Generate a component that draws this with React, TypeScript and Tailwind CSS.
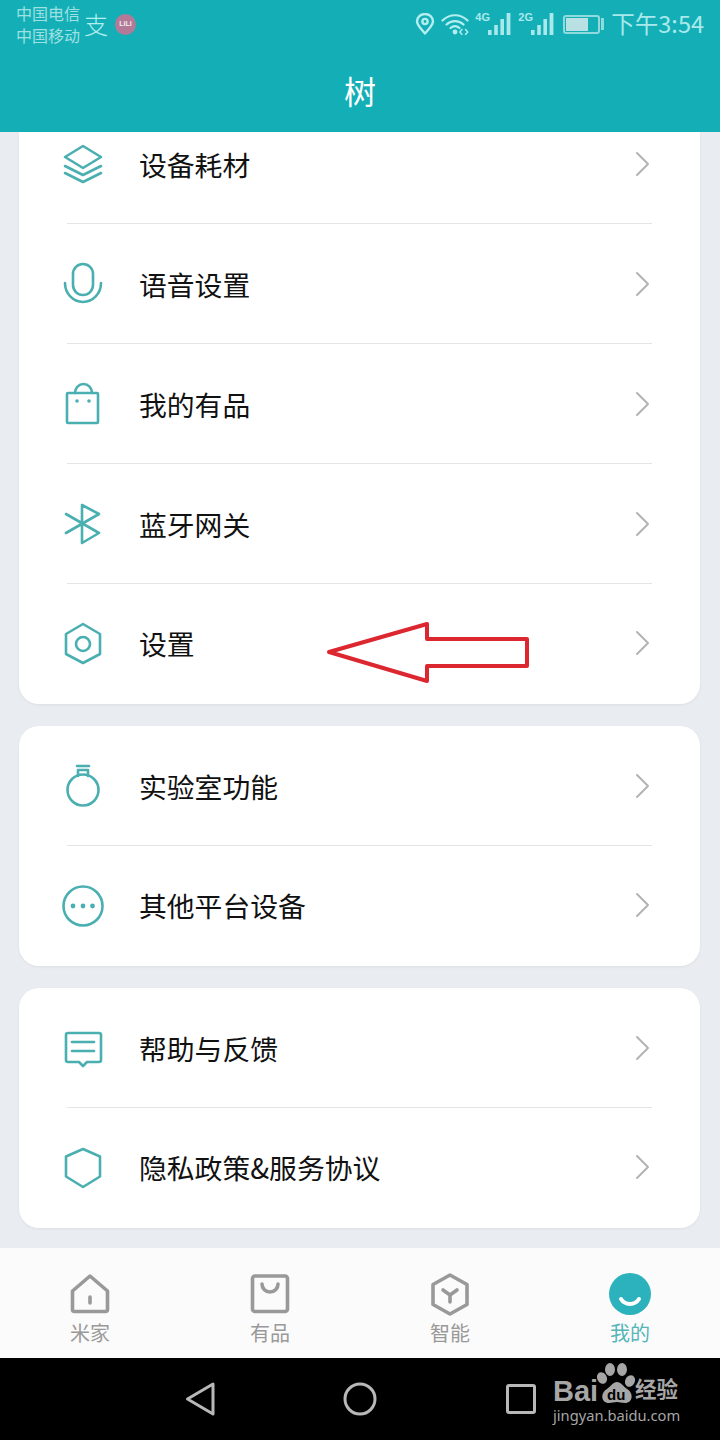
import React from "react";

const CJK = "font-['Noto_Sans_CJK_SC','Noto_Sans',sans-serif]";

function Ico({ children }: { children: React.ReactNode }) {
  return (
    <svg width="48" height="48" viewBox="0 0 48 48" fill="none" stroke="#4aafb1" strokeWidth="2.6" strokeLinejoin="round" strokeLinecap="round" className="shrink-0">
      {children}
    </svg>
  );
}

const Layers = () => (
  <Ico>
    <path d="M24 5L42 16L24 27L6 16Z" />
    <path d="M6 25L24 34L42 25" />
    <path d="M6 32L24 41L42 32" />
  </Ico>
);
const Mic = () => (
  <Ico>
    <rect x="14" y="3" width="20" height="31" rx="10" />
    <path d="M6 22A18 19 0 0 0 42 22" />
  </Ico>
);
const Bag = () => (
  <Ico>
    <rect x="8" y="12" width="31" height="30" rx="1" />
    <path d="M16 12A8.5 9 0 0 1 33 12" />
    <circle cx="18" cy="20" r="1.8" fill="#4aafb1" stroke="none" />
    <circle cx="30" cy="20" r="1.8" fill="#4aafb1" stroke="none" />
  </Ico>
);
const Bt = () => (
  <Ico>
    <path d="M7 13L40 32L23 42V4L40 13L7 32" />
  </Ico>
);
const Hex = () => (
  <Ico>
    <path d="M24 4L41 14V34L24 43L7 34V14Z" />
    <circle cx="24" cy="24" r="7" />
  </Ico>
);
const Flask = () => (
  <Ico>
    <circle cx="24" cy="27" r="15.5" />
    <path d="M18 3H30" />
    <path d="M19 13V7H29V13" />
  </Ico>
);
const Dots = () => (
  <Ico>
    <circle cx="24" cy="24" r="19.5" />
    <circle cx="14" cy="24" r="2.4" fill="#4aafb1" stroke="none" />
    <circle cx="24" cy="24" r="2.4" fill="#4aafb1" stroke="none" />
    <circle cx="33.5" cy="24" r="2.4" fill="#4aafb1" stroke="none" />
  </Ico>
);
const Msg = () => (
  <Ico>
    <path d="M9 8H40Q42 8 42 10V35Q42 37 40 37H28L24 41L20 37H9Q7 37 7 35V10Q7 8 9 8Z" />
    <path d="M13 17H35" />
    <path d="M13 26H35" />
  </Ico>
);
const Shield = () => (
  <Ico>
    <path d="M24 5L41 12.5V32.5L24 43L7 32.5V12.5Z" />
  </Ico>
);

const Chevron = () => (
  <svg width="16" height="26" viewBox="0 0 16 26" fill="none" stroke="#b3b3b3" strokeWidth="2" strokeLinecap="round" strokeLinejoin="round" className="mb-[2px] shrink-0">
    <path d="M3 2L14 13L3 24" />
  </svg>
);

function Row({ icon, label, cls }: { icon: React.ReactNode; label: string; cls: string }) {
  return (
    <div className={`flex items-center pl-[40px] pr-[50px] ${cls}`}>
      {icon}
      <span className={`ml-[32px] flex-1 pb-[3px] text-[27.8px] leading-[36px] text-[#111] ${CJK}`}>{label}</span>
      <Chevron />
    </div>
  );
}

const Divider = () => <div className="mx-[48px] h-px bg-[#e4e4e4]" />;

function Tab({ icon, label, active }: { icon: React.ReactNode; label: string; active?: boolean }) {
  return (
    <div className="flex flex-1 flex-col items-center pt-[24px]">
      <div className="h-[46px] w-[48px]">{icon}</div>
      <span className={`mt-[2px] text-[20px] leading-[26px] ${active ? "text-[#55b5b8]" : "text-[#999]"} ${CJK}`}>{label}</span>
    </div>
  );
}

const tabStroke = { fill: "none", stroke: "#999", strokeWidth: 3.6, strokeLinejoin: "round", strokeLinecap: "round" } as const;

function StatusBars() {
  return (
    <svg width="24" height="22" viewBox="0 0 24 22" fill="#a9e9ec">
      <rect x="0" y="17" width="3.6" height="5" />
      <rect x="6.2" y="12" width="3.6" height="10" />
      <rect x="12.4" y="6" width="3.6" height="16" />
      <rect x="18.6" y="0" width="3.8" height="22" />
    </svg>
  );
}

export default function App() {
  return (
    <div className={`relative flex h-[1440px] w-[720px] flex-col overflow-hidden bg-[#e9edf1] ${CJK}`}>
      <header className="flex h-[132px] shrink-0 flex-col bg-[#14afb6]">
        <div className="flex h-[48px] items-center pl-[16px] pr-[16px]">
          <div className="flex flex-col text-[16px] leading-[22px] text-[#9fe0e2]">
            <span>中国电信</span>
            <span>中国移动</span>
          </div>
          <span className="ml-[4px] text-[24px] font-light leading-[28px] text-[#b5eef0]">支</span>
          <div className="ml-[7px] flex h-[21px] w-[21px] items-center justify-center rounded-full bg-[#b37a98] font-['Liberation_Sans',sans-serif] text-[7px] font-bold text-[#eee]">
            LiLi
          </div>
          <div className="flex-1" />
          <svg width="20" height="22" viewBox="0 0 20 22" fill="none" stroke="#b5eef0" strokeWidth="2.4" className="mr-[6px]">
            <path d="M10 20.5C5 15 2 11.5 2 8.5A8 7.5 0 0 1 18 8.5C18 11.5 15 15 10 20.5Z" strokeLinejoin="round" />
            <circle cx="10" cy="8.5" r="2.6" />
          </svg>
          <svg width="28" height="22" viewBox="0 0 28 22" fill="none" stroke="#b5eef0" strokeWidth="2.2" strokeLinecap="round" className="mr-[6px]">
            <path d="M1.5 7.5C8.5 0.5 19.5 0.5 26.5 7.5" />
            <path d="M5.5 11.5C10.5 7 17.5 7 22.5 11.5" />
            <path d="M9.5 15C12.5 12.5 15.5 12.5 18.5 15" />
            <circle cx="14" cy="19" r="2.4" fill="#b5eef0" stroke="none" />
            <path d="M21 16.5L18.8 19L21 21.5M24.5 16.5L26.7 19L24.5 21.5" strokeWidth="1.4" />
          </svg>
          <div className="relative h-[22px] w-[36px]">
            <span className="absolute left-0 top-[-2px] font-['Liberation_Sans',sans-serif] text-[11px] font-bold leading-[12px] text-[#a9e9ec]">4G</span>
            <div className="absolute right-[-1px] top-0">
              <StatusBars />
            </div>
          </div>
          <div className="relative ml-[7px] h-[22px] w-[36px]">
            <span className="absolute left-0 top-[-2px] font-['Liberation_Sans',sans-serif] text-[11px] font-bold leading-[12px] text-[#a9e9ec]">2G</span>
            <div className="absolute right-[-1px] top-0">
              <StatusBars />
            </div>
          </div>
          <div className="ml-[9px] flex h-[19px] w-[37px] items-center rounded-[3px] border-2 border-[#8fdadd] px-[1px]">
            <div className="h-[13px] w-[22px] bg-[#b9e0e2]" />
          </div>
          <div className="ml-[1px] h-[12px] w-[3px] bg-[#8fdadd]" />
          <span className="ml-[7px] pb-[2px] text-[23.5px] leading-[28px] text-[#a9e9ec]">下午3:54</span>
        </div>
        <div className="flex flex-1 items-center justify-center pb-[1px] text-[32px] leading-[40px] text-white">树</div>
      </header>

      <main className="flex flex-1 flex-col gap-[22px] pl-[19px] pr-[20px]">
        <section className="rounded-b-[20px] bg-white shadow-[0_1px_3px_rgba(0,0,0,0.06)]">
          <Row icon={<Layers />} label="设备耗材" cls="h-[91px] pb-[25px]" />
          <Divider />
          <Row icon={<Mic />} label="语音设置" cls="h-[119px] pt-[3px]" />
          <Divider />
          <Row icon={<Bag />} label="我的有品" cls="h-[119px] pt-[3px]" />
          <Divider />
          <Row icon={<Bt />} label="蓝牙网关" cls="h-[119px] pt-[3px]" />
          <Divider />
          <Row icon={<Hex />} label="设置" cls="h-[120px]" />
        </section>
        <section className="rounded-[20px] bg-white shadow-[0_1px_3px_rgba(0,0,0,0.06)]">
          <Row icon={<Flask />} label="实验室功能" cls="h-[119px] pt-[3px]" />
          <Divider />
          <Row icon={<Dots />} label="其他平台设备" cls="h-[120px]" />
        </section>
        <section className="rounded-[20px] bg-white shadow-[0_1px_3px_rgba(0,0,0,0.06)]">
          <Row icon={<Msg />} label="帮助与反馈" cls="h-[119px] pt-[3px]" />
          <Divider />
          <Row icon={<Shield />} label="隐私政策&服务协议" cls="h-[120px]" />
        </section>
      </main>

      <nav className="flex h-[110px] shrink-0 bg-[#fbfbfb]">
        <Tab
          label="米家"
          icon={
            <svg width="48" height="46" viewBox="0 0 48 46">
              <path d="M6.5 19L24 4L41.5 19V37.5Q41.5 39.5 39.5 39.5H8.5Q6.5 39.5 6.5 37.5Z" {...tabStroke} />
              <path d="M24 25V31" {...tabStroke} />
            </svg>
          }
        />
        <Tab
          label="有品"
          icon={
            <svg width="48" height="46" viewBox="0 0 48 46">
              <rect x="6.5" y="4" width="35" height="35.5" rx="2.5" {...tabStroke} />
              <path d="M16 12A8 8 0 0 0 32 12" {...tabStroke} />
            </svg>
          }
        />
        <Tab
          label="智能"
          icon={
            <svg width="48" height="46" viewBox="0 0 48 46">
              <path d="M24 3L41 12.5V32.5L24 42L7 32.5V12.5Z" {...tabStroke} />
              <path d="M17 18L24 23L31 18M24 23V30" {...tabStroke} />
            </svg>
          }
        />
        <Tab
          active
          label="我的"
          icon={
            <svg width="48" height="46" viewBox="0 0 48 46">
              <circle cx="24" cy="22" r="21" fill="#2bb2bd" />
              <path d="M15 27C19 33.5 29 33.5 33 27" fill="none" stroke="#fff" strokeWidth="4" strokeLinecap="round" />
            </svg>
          }
        />
      </nav>

      <footer className="flex h-[82px] shrink-0 items-center bg-black pl-[184px]">
        <svg width="32" height="36" viewBox="0 0 32 36" fill="none" stroke="#b8b8b8" strokeWidth="3" strokeLinejoin="round">
          <path d="M3.5 18L29 3V33Z" />
        </svg>
        <svg width="34" height="34" viewBox="0 0 34 34" fill="none" stroke="#b8b8b8" strokeWidth="3" className="ml-[127px]">
          <circle cx="17" cy="17" r="15" />
        </svg>
        <div className="ml-[129px] h-[30px] w-[30px] rounded-[3px] border-[3px] border-[#b8b8b8]" />
      </footer>

      {/* watermark */}
      <div className="absolute left-[553px] top-[1362px] h-[70px] w-[130px] text-[#a6a6a6]">
        <span className="absolute left-0 top-[13px] font-['Liberation_Sans',sans-serif] text-[29px] font-bold leading-[32px]">Bai</span>
        <svg width="40" height="44" viewBox="0 0 40 44" fill="#a6a6a6" className="absolute left-[43px] top-0">
          <ellipse cx="6" cy="16" rx="4.8" ry="6" transform="rotate(-25 6 16)" />
          <ellipse cx="14" cy="7.5" rx="5" ry="6.5" />
          <ellipse cx="26" cy="7.5" rx="5" ry="6.5" />
          <ellipse cx="34" cy="19" rx="4.8" ry="6" transform="rotate(25 34 19)" />
          <path d="M21 20C25 20 27 24 31 27C38 31 37 41 29 41C26 41 23 40 21 40C18 40 16 41 13 41C5 41 4 31 11 27C15 24 17 20 21 20Z" />
        </svg>
        <span className="absolute left-[54px] top-[26px] font-['Liberation_Sans',sans-serif] text-[15px] font-bold leading-[14px] text-black">du</span>
        <span className={`absolute left-[82px] top-[10px] text-[21.5px] font-bold leading-[32px] ${CJK}`}>经验</span>
        <span className="absolute left-0 top-[43px] font-['Noto_Sans',sans-serif] text-[14.7px] leading-[20px]">jingyan.baidu.com</span>
      </div>

      {/* annotation arrow */}
      <svg width="220" height="72" viewBox="0 0 220 72" fill="none" stroke="#dc2730" strokeWidth="4" strokeLinejoin="round" className="absolute left-[320px] top-[616px]">
        <path d="M9 36L107 8V23L207 23V50L107 50V65Z" />
      </svg>
    </div>
  );
}
